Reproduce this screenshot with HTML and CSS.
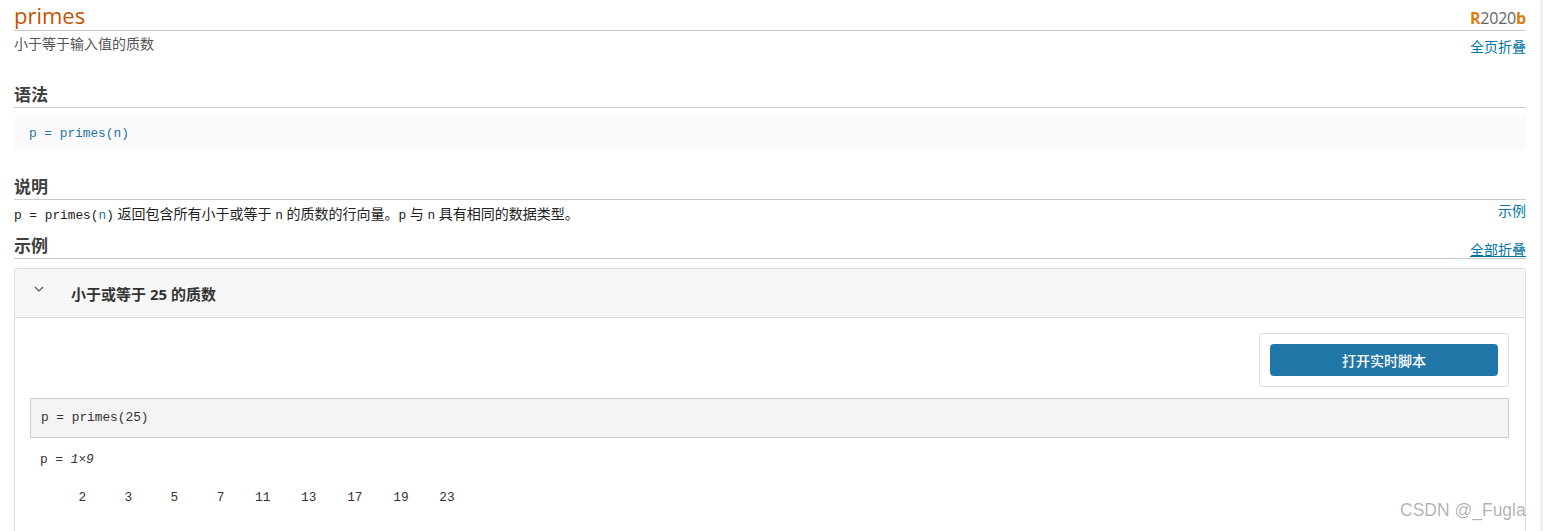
FILE: index.html
```html
<!DOCTYPE html>
<html lang="zh-CN">
<head>
    <meta charset="UTF-8">
    <meta name="viewport" content="width=device-width, initial-scale=1.0">
    <title>primes - 小于等于输入值的质数</title>
    <link rel="stylesheet" href="styles.css">
</head>
<body>
    <div class="page">
        <main class="doc">
            <!-- Function title -->
            <header class="ref-head">
                <div class="title-row">
                    <h1 class="ref-title">primes</h1>
                    <span class="release"><b>R</b>2020<b>b</b></span>
                </div>
                <div class="sub-row">
                    <span class="purpose">小于等于输入值的质数</span>
                    <a class="side-link" href="#">全页折叠</a>
                </div>
            </header>

            <!-- Syntax -->
            <section class="block">
                <h2 class="sec-title">语法</h2>
                <div class="syntax-box"><code class="syntax-code">p = primes(n)</code></div>
            </section>

            <!-- Description -->
            <section class="block desc-block">
                <h2 class="sec-title">说明</h2>
                <div class="desc-row">
                    <p class="desc"><code class="mono">p = primes(<a class="arg" href="#">n</a>)</code> 返回包含所有小于或等于 <code class="mono">n</code> 的质数的行向量。<code class="mono">p</code> 与 <code class="mono">n</code> 具有相同的数据类型。</p>
                    <a class="side-link up" href="#">示例</a>
                </div>
            </section>

            <!-- Examples -->
            <section class="block examples">
                <div class="sec-row">
                    <h2 class="sec-title plain">示例</h2>
                    <a class="side-link under" href="#">全部折叠</a>
                </div>

                <div class="example">
                    <div class="example-head">
                        <svg class="chevron" width="10" height="6" viewBox="0 0 10 6">
                            <polyline points="1,1 5,5 9,1" fill="none" stroke="#555" stroke-width="1.2"/>
                        </svg>
                        <h3 class="example-title">小于或等于 25 的质数</h3>
                    </div>
                    <div class="example-body">
                        <div class="live-row">
                            <div class="live-box">
                                <button class="live-btn">打开实时脚本</button>
                            </div>
                        </div>
                        <pre class="code-input">p = primes(25)</pre>
                        <pre class="code-output">p = <i>1×9</i>

     2     3     5     7    11    13    17    19    23
</pre>
                    </div>
                </div>
            </section>
        </main>
        <div class="scroll-edge"></div>
    </div>

    <div class="watermark">CSDN @_Fugla</div>
</body>
</html>
```

FILE: styles.css
```css
body {
    margin: 0;
    background-color: #ffffff;
    font-family: "Open Sans", "Noto Sans CJK SC", sans-serif;
    color: #333;
    overflow: hidden;
}
a {
    color: #0076a8;
    text-decoration: none;
}
.page {
    display: flex;
    height: 531px;
}
.doc {
    flex: 1;
    padding: 0 14px;
    min-width: 0;
}
.scroll-edge {
    width: 3px;
    background-color: #f1f1f1;
}

/* Title */
.title-row {
    display: flex;
    justify-content: space-between;
    align-items: baseline;
    height: 30px;
    border-bottom: 1px solid #cbcbcb;
}
.ref-title {
    margin: 0;
    font-size: 22px;
    font-weight: 400;
    line-height: 30px;
    color: #c45400;
}
.release {
    font-size: 16px;
    color: #666;
    letter-spacing: -0.2px;
}
.release b {
    color: #e07b10;
    font-weight: 700;
}
.sub-row {
    display: flex;
    justify-content: space-between;
    align-items: flex-start;
    padding-top: 3px;
}
.purpose {
    font-size: 14px;
    line-height: 20px;
    color: #555;
}
.side-link {
    font-size: 14px;
    line-height: 20px;
    margin-top: 3px;
}

/* Sections */
.block {
    margin-top: 26px;
}
.desc-block {
    margin-top: 25px;
}
.examples {
    margin-top: 8px;
}
.sec-title {
    margin: 0;
    font-size: 17px;
    font-weight: 700;
    line-height: 24px;
    color: #404040;
    border-bottom: 1px solid #cbcbcb;
}
.sec-row {
    display: flex;
    justify-content: space-between;
    align-items: flex-end;
    border-bottom: 1px solid #cbcbcb;
}
.sec-title.plain {
    border-bottom: none;
}
.side-link.under {
    text-decoration: underline;
    line-height: 16px;
    margin-top: 0;
}
.side-link.up {
    margin-top: -3px;
}
.syntax-box {
    margin-top: 8px;
    height: 34px;
    background-color: #fafafa;
    display: flex;
    align-items: center;
    padding-left: 15px;
}
.syntax-code, .mono, .code-input, .code-output {
    font-family: "Liberation Mono", "DejaVu Sans Mono", monospace;
    font-size: 12.8px;
}
.syntax-code {
    color: #1f73a6;
}
.desc-row {
    display: flex;
    justify-content: space-between;
    align-items: flex-start;
    padding-top: 4px;
}
.desc {
    margin: 0;
    font-size: 14px;
    line-height: 20px;
    color: #222;
}
.arg {
    color: #1f73a6;
}

/* Example panel */
.example {
    margin-top: 9px;
    border: 1px solid #dcdcdc;
    border-radius: 4px 4px 0 0;
    border-bottom: none;
    height: 400px;
}
.example-head {
    display: flex;
    align-items: center;
    height: 48px;
    background-color: #f7f7f7;
    border-bottom: 1px solid #dcdcdc;
    border-radius: 4px 4px 0 0;
}
.chevron {
    margin: 0 0 8px 19px;
}
.example-title {
    margin: 0 0 0 27px;
    font-size: 15px;
    font-weight: 700;
    color: #333;
}
.example-body {
    padding: 15px 16px 0 15px;
}
.live-row {
    display: flex;
    justify-content: flex-end;
}
.live-box {
    border: 1px solid #dedede;
    border-radius: 4px;
    padding: 10px;
}
.live-btn {
    display: block;
    width: 228px;
    height: 32px;
    border: none;
    border-radius: 4px;
    background-color: #1f76a7;
    color: #fff;
    font-family: "Noto Sans CJK SC", sans-serif;
    font-size: 14px;
    font-weight: 500;
}
.code-input {
    margin: 11px 0 0 0;
    height: 38px;
    line-height: 38px;
    padding: 0 10px;
    background-color: #f4f4f4;
    border: 1px solid #cccccc;
    color: #333;
}
.code-output {
    margin: 12px 0 0 0;
    padding-left: 10px;
    line-height: 19px;
    color: #333;
}

/* Watermark over the page */
.watermark {
    position: absolute;
    left: 1400px;
    top: 500px;
    font-family: "Liberation Sans", sans-serif;
    font-size: 17.5px;
    color: rgba(0, 0, 0, 0.32);
}
```
